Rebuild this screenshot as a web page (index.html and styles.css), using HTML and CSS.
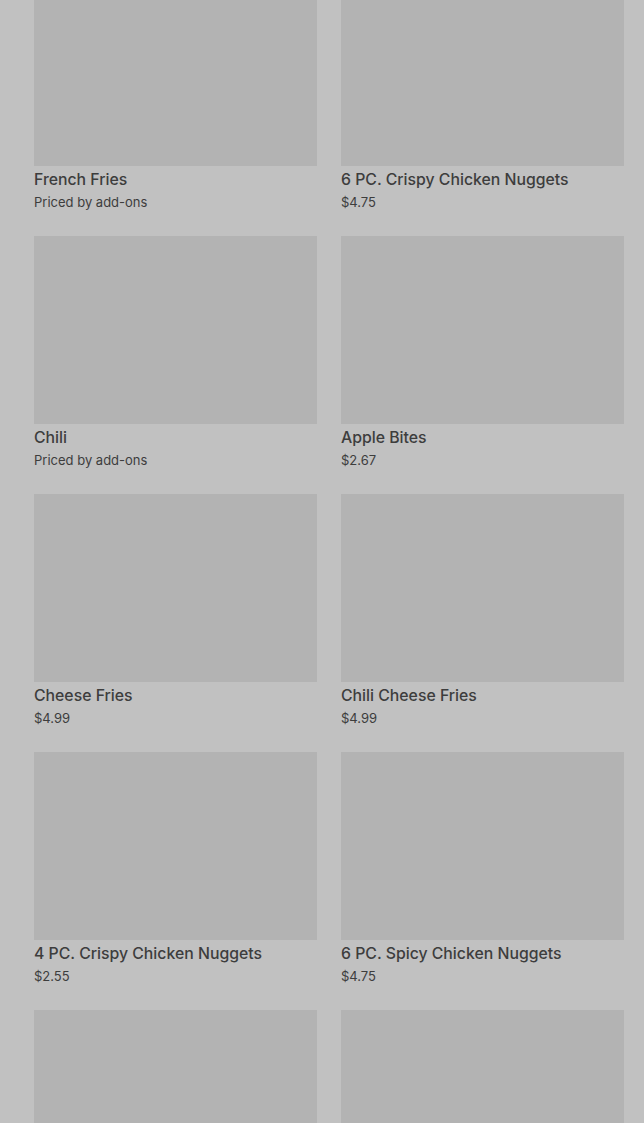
FILE: index.html
```html
<!DOCTYPE html>
<html lang="en">
<head>
  <meta charset="UTF-8" />
  <meta name="viewport" content="width=device-width, initial-scale=1.0"/>
  <title>Menu</title>
  <link rel="stylesheet" href="styles.css">
</head>
<body>

  <!-- Menu grid -->
  <section class="menu-grid">
    <div class="item">
      <div class="item-img"></div>
      <div class="item-name">French Fries</div>
      <div class="item-price">Priced by add-ons</div>
    </div>
    <div class="item">
      <div class="item-img"></div>
      <div class="item-name">6 PC. Crispy Chicken Nuggets</div>
      <div class="item-price">$4.75</div>
    </div>
    <div class="item">
      <div class="item-img"></div>
      <div class="item-name">Chili</div>
      <div class="item-price">Priced by add-ons</div>
    </div>
    <div class="item">
      <div class="item-img"></div>
      <div class="item-name">Apple Bites</div>
      <div class="item-price">$2.67</div>
    </div>
    <div class="item">
      <div class="item-img"></div>
      <div class="item-name">Cheese Fries</div>
      <div class="item-price">$4.99</div>
    </div>
    <div class="item">
      <div class="item-img"></div>
      <div class="item-name">Chili Cheese Fries</div>
      <div class="item-price">$4.99</div>
    </div>
    <div class="item">
      <div class="item-img"></div>
      <div class="item-name">4 PC. Crispy Chicken Nuggets</div>
      <div class="item-price">$2.55</div>
    </div>
    <div class="item">
      <div class="item-img"></div>
      <div class="item-name">6 PC. Spicy Chicken Nuggets</div>
      <div class="item-price">$4.75</div>
    </div>
    <div class="item">
      <div class="item-img"></div>
    </div>
    <div class="item">
      <div class="item-img"></div>
    </div>
  </section>

</body>
</html>
```

FILE: styles.css
```css
html, body {
  margin: 0;
  padding: 0;
  background: #c1c1c1;
  font-family: Inter, Roboto, "Liberation Sans", sans-serif;
  overflow: hidden;
}

/* Menu grid */
.menu-grid {
  display: grid;
  grid-template-columns: 283px 283px;
  column-gap: 24px;
  row-gap: 24px;
  padding: 0 20px 0 34px;
  margin-top: -22px;
}

.item {
  display: flex;
  flex-direction: column;
  height: 234px;
}

.item-img {
  height: 188px;
  background: #b3b3b3;
}

.item-name {
  margin-top: 3px;
  font-size: 15.8px;
  line-height: 22px;
  font-weight: 500;
  color: #3d3d3d;
}

.item-price {
  margin-top: 1px;
  font-size: 13px;
  line-height: 20px;
  color: #3d3d3d;
}
```
